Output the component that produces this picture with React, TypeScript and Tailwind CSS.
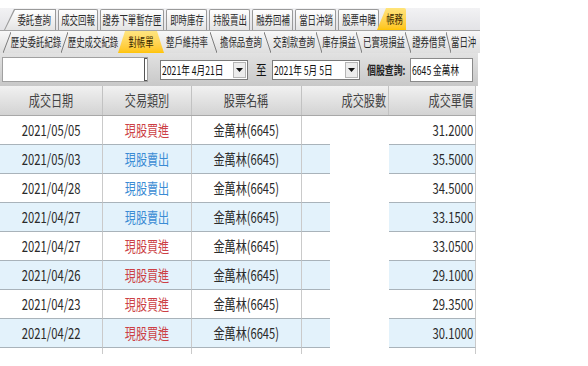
import React from 'react';

type Row = { date: string; type: string; name: string; price: string };

const rows: Row[] = [
  { date: '2021/05/05', type: '現股買進', name: '金萬林(6645)', price: '31.2000' },
  { date: '2021/05/03', type: '現股賣出', name: '金萬林(6645)', price: '35.5000' },
  { date: '2021/04/28', type: '現股賣出', name: '金萬林(6645)', price: '34.5000' },
  { date: '2021/04/27', type: '現股賣出', name: '金萬林(6645)', price: '33.1500' },
  { date: '2021/04/27', type: '現股買進', name: '金萬林(6645)', price: '33.0500' },
  { date: '2021/04/26', type: '現股買進', name: '金萬林(6645)', price: '29.1000' },
  { date: '2021/04/23', type: '現股買進', name: '金萬林(6645)', price: '29.3500' },
  { date: '2021/04/22', type: '現股買進', name: '金萬林(6645)', price: '30.1000' },
];

const topTabs = [
  { label: '成交回報', w: 'w-[40px]' },
  { label: '證券下單暫存匣', w: 'w-[64px]' },
  { label: '即時庫存', w: 'w-[41px]' },
  { label: '持股賣出', w: 'w-[41px]' },
  { label: '融券回補', w: 'w-[41px]' },
  { label: '當日沖銷', w: 'w-[41px]' },
  { label: '股票申購', w: 'w-[41px]' },
];

const Narrow: React.FC<{ children: React.ReactNode; className?: string }> = ({ children, className = '' }) => (
  <span className={`inline-block whitespace-nowrap ${className}`}>{children}</span>
);

const Slash: React.FC<{ dir: 'f' | 'b'; w: number }> = ({ dir, w }) => (
  <svg width={w} height="22" className="shrink-0">
    {dir === 'f' ? (
      <line x1="0" y1="22" x2={w} y2="1" stroke="#7c7c7c" strokeWidth="1" />
    ) : (
      <line x1="0" y1="1" x2={w} y2="22" stroke="#7c7c7c" strokeWidth="1" />
    )}
  </svg>
);

const SubTab: React.FC<{ label: string; w: string }> = ({ label, w }) => (
  <div className={`${w} shrink-0 h-full flex items-center justify-center text-[12px] text-[#2a2a2a]`}>
    <Narrow className="scale-x-[0.7]">{label}</Narrow>
  </div>
);

const DateBox: React.FC<{ text: string }> = ({ text }) => (
  <div className="w-[88px] h-[20px] bg-white border border-[#7a7a7a] flex items-center">
    <div className="flex-1 min-w-0 pl-[1px] text-[12px] text-[#111] leading-none">
      <Narrow className="scale-x-[0.72] origin-left">{text}</Narrow>
    </div>
    <div className="w-[13px] h-[16px] shrink-0 mr-[1px] bg-[#ececec] border border-[#b5b5b5] flex items-center justify-center">
      <svg width="7" height="4">
        <polygon points="0,0 7,0 3.5,4" fill="#111" />
      </svg>
    </div>
  </div>
);

const cols = 'grid grid-cols-[103px_89px_110px_87px_87px]';

export default function App() {
  return (
    <div className="w-[588px] h-[366px] bg-white overflow-hidden font-['Noto_Sans_CJK_TC',sans-serif]">
      <div className="w-[480px] pt-[8px]">
        {/* main tabs */}
        <div className="h-[23px] bg-linear-to-b from-[#f2f2f4] to-[#e3e3e6] border-b border-[#a4a4a4] flex items-end pl-[4px] gap-[2px]">
          <div className="w-[52px] h-[21px] bg-[#9a9a9a] [clip-path:polygon(0_100%,10px_0,100%_0,100%_100%)] pt-[1px] pr-[1px]">
            <div className="w-full h-full bg-linear-to-b from-white to-[#e4e4e4] [clip-path:polygon(1px_100%,11px_0,100%_0,100%_100%)] flex items-center justify-end pr-[4px] text-[12px] text-[#2a2a2a]">
              <Narrow className="scale-x-[0.7] origin-right">委託查詢</Narrow>
            </div>
          </div>
          {topTabs.map((t) => (
            <div
              key={t.label}
              className={`${t.w} h-[21px] border border-b-0 border-[#9a9a9a] rounded-t-[2px] bg-linear-to-b from-white to-[#e4e4e4] flex items-center justify-center text-[12px] text-[#2a2a2a]`}
            >
              <Narrow className="scale-x-[0.7]">{t.label}</Narrow>
            </div>
          ))}
          <div className="w-[29px] -ml-[4px] h-[22px] bg-linear-to-b from-[#ffe47a] to-[#ffc400] [clip-path:polygon(0_100%,9px_0,100%_0,100%_100%)] rounded-tr-[2px] flex items-center justify-end pr-[3px] text-[12px] text-[#3a2a00]">
            <Narrow className="scale-x-[0.7] origin-right">帳務</Narrow>
          </div>
        </div>

        {/* sub tabs */}
        <div className="h-[22px] bg-linear-to-b from-[#f8f8f8] to-[#dedede] flex items-stretch pl-[3px] overflow-hidden">
          <Slash dir="f" w={8} />
          <SubTab label="歷史委託紀錄" w="w-[50px]" />
          <Slash dir="f" w={7} />
          <SubTab label="歷史成交紀錄" w="w-[50px]" />
          <div className="w-[46px] shrink-0 h-full bg-linear-to-b from-[#ffe680] to-[#ffc400] [clip-path:polygon(0_100%,7px_0,calc(100%-7px)_0,100%_100%)] flex items-center justify-center text-[12px] text-[#3a2a00]">
            <Narrow className="scale-x-[0.7]">對帳單</Narrow>
          </div>
          <SubTab label="整戶維持率" w="w-[46px]" />
          <Slash dir="b" w={7} />
          <SubTab label="擔保品查詢" w="w-[47px]" />
          <Slash dir="b" w={7} />
          <SubTab label="交割款查詢" w="w-[45px]" />
          <Slash dir="b" w={6} />
          <SubTab label="庫存損益" w="w-[34px]" />
          <Slash dir="b" w={6} />
          <SubTab label="已實現損益" w="w-[43px]" />
          <Slash dir="b" w={6} />
          <SubTab label="證券借貸" w="w-[35px]" />
          <Slash dir="b" w={5} />
          <div className="w-[28px] shrink-0 h-full flex items-center text-[12px] text-[#2a2a2a]">
            <Narrow className="scale-x-[0.7] origin-left">當日沖</Narrow>
          </div>
        </div>

        {/* filter bar */}
        <div className="h-[33px] w-[478px] bg-linear-to-b from-[#e2e2e2] to-[#c8c8c8] flex items-center">
          <div className="ml-[2px] w-[146px] h-[25px] shrink-0 bg-white border border-[#a0a0a0] flex justify-end">
            <div className="w-[3px] h-full border-l border-y border-[#555]" />
          </div>
          <div className="ml-[12px] shrink-0">
            <DateBox text="2021年 4月21日" />
          </div>
          <div className="ml-[8px] w-[11px] shrink-0 text-[14px] text-[#111]">
            <Narrow className="scale-x-[0.75] origin-left">至</Narrow>
          </div>
          <div className="ml-[5px] shrink-0">
            <DateBox text="2021年 5月 5日" />
          </div>
          <div className="ml-[7px] w-[42px] shrink-0 text-[12px] font-bold text-[#222]">
            <Narrow className="scale-x-[0.74] origin-left">個股查詢:</Narrow>
          </div>
          <div className="ml-[1px] w-[63px] h-[24px] shrink-0 bg-white border border-[#8a8a8a] flex items-center pl-[1px] text-[12px] text-[#111]">
            <Narrow className="scale-x-[0.72] origin-left">6645 金萬林</Narrow>
          </div>
        </div>

        {/* table */}
        <div className="w-[476px]">
          <div className={`${cols} h-[30px] bg-linear-to-b from-[#f1f1f1] to-[#d3d3d3] border-b border-[#a8a8a8] text-[15px] text-[#444]`}>
            <div className="border-r border-[#c2c2c2] flex items-center justify-center">
              <Narrow className="scale-x-[0.74]">成交日期</Narrow>
            </div>
            <div className="border-r border-[#c2c2c2] flex items-center justify-center">
              <Narrow className="scale-x-[0.74]">交易類別</Narrow>
            </div>
            <div className="border-r border-[#c2c2c2] flex items-center justify-center">
              <Narrow className="scale-x-[0.74]">股票名稱</Narrow>
            </div>
            <div className="border-r border-[#c2c2c2] flex items-center justify-end pr-[2px]">
              <Narrow className="scale-x-[0.74] origin-right">成交股數</Narrow>
            </div>
            <div className="border-r border-[#c2c2c2] flex items-center justify-end pr-[2px]">
              <Narrow className="scale-x-[0.74] origin-right">成交單價</Narrow>
            </div>
          </div>

          {rows.map((r, i) => {
            const bg = i % 2 === 1 ? 'bg-[#e3f2fb]' : 'bg-white';
            const color = r.type === '現股買進' ? 'text-[#cc3f45]' : 'text-[#3a8bd4]';
            return (
              <div key={i} className={`${cols} h-[29px] text-[15px] text-[#2a2a2a]`}>
                <div className={`${bg} border-b border-r border-b-[#a9b3ba] border-r-[#cacaca] flex items-center justify-center`}>
                  <Narrow className="scale-x-[0.75]">{r.date}</Narrow>
                </div>
                <div className={`${bg} ${color} border-b border-r border-b-[#a9b3ba] border-r-[#cacaca] flex items-center justify-center`}>
                  <Narrow className="scale-x-[0.74]">{r.type}</Narrow>
                </div>
                <div className={`${bg} border-b border-r border-b-[#a9b3ba] border-r-[#cacaca] flex items-center justify-center`}>
                  <Narrow className="scale-x-[0.74]">{r.name}</Narrow>
                </div>
                <div className="flex">
                  <div className={`${bg} w-[28px] border-b border-[#a9b3ba]`} />
                  <div className="flex-1 bg-white" />
                </div>
                <div className={`${bg} border-b border-r border-b-[#a9b3ba] border-r-[#cacaca] flex items-center justify-end pr-[2px]`}>
                  <Narrow className="scale-x-[0.75] origin-right">{r.price}</Narrow>
                </div>
              </div>
            );
          })}

          <div className={`${cols} h-[6px]`}>
            <div className="border-r border-[#cacaca]" />
            <div className="border-r border-[#cacaca]" />
            <div className="border-r border-[#cacaca]" />
            <div />
            <div className="border-r border-[#cacaca]" />
          </div>
        </div>
      </div>
    </div>
  );
}
